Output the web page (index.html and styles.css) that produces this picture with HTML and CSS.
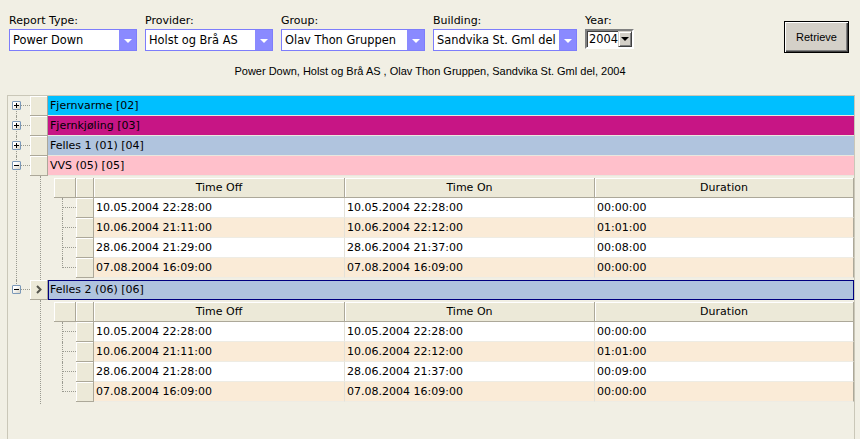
FILE: index.html
```html
<!DOCTYPE html>
<html lang="no">
<head>
    <meta charset="UTF-8">
    <title>Power Down</title>
    <link rel="stylesheet" href="styles.css">
</head>
<body>
<div class="toolbar">
    <div class="field">
        <label>Report Type:</label>
        <div class="combo w-small"><span>Power Down</span><i class="drop"></i></div>
    </div>
    <div class="field">
        <label>Provider:</label>
        <div class="combo w-small"><span>Holst og Brå AS</span><i class="drop"></i></div>
    </div>
    <div class="field">
        <label>Group:</label>
        <div class="combo w-wide"><span>Olav Thon Gruppen</span><i class="drop"></i></div>
    </div>
    <div class="field">
        <label>Building:</label>
        <div class="combo w-wide"><span>Sandvika St. Gml del</span><i class="drop"></i></div>
    </div>
    <div class="field">
        <label>Year:</label>
        <div class="year"><span>2004</span><i class="ybtn"></i></div>
    </div>
    <button type="button" class="retrieve">Retrieve</button>
</div>

<div class="summary">Power Down, Holst og Brå AS , Olav Thon Gruppen, Sandvika St. Gml del, 2004</div>

<div class="grid">

    <div class="node first">
        <div class="row">
            <div class="gutter"><span class="exp plus"></span></div>
            <div class="sel"></div>
            <div class="cell cyan">Fjernvarme [02]</div>
        </div>
    </div>

    <div class="node">
        <div class="row">
            <div class="gutter"><span class="exp plus"></span></div>
            <div class="sel"></div>
            <div class="cell magenta">Fjernkjøling [03]</div>
        </div>
    </div>

    <div class="node">
        <div class="row">
            <div class="gutter"><span class="exp plus"></span></div>
            <div class="sel"></div>
            <div class="cell steel">Felles 1 (01) [04]</div>
        </div>
    </div>

    <div class="node">
        <div class="row">
            <div class="gutter"><span class="exp minus"></span></div>
            <div class="sel"></div>
            <div class="cell pink">VVS (05) [05]</div>
        </div>
        <div class="children">
            <div class="sub">
                <div class="sub-head">
                    <div class="h-gap"></div>
                    <div class="h-sel"></div>
                    <div class="h col1">Time Off</div>
                    <div class="h col2">Time On</div>
                    <div class="h col3">Duration</div>
                </div>
                <div class="sub-row">
                    <div class="r-gap"></div><div class="sel"></div>
                    <div class="d col1">10.05.2004 22:28:00</div>
                    <div class="d col2">10.05.2004 22:28:00</div>
                    <div class="d col3">00:00:00</div>
                </div>
                <div class="sub-row alt">
                    <div class="r-gap"></div><div class="sel"></div>
                    <div class="d col1">10.06.2004 21:11:00</div>
                    <div class="d col2">10.06.2004 22:12:00</div>
                    <div class="d col3">01:01:00</div>
                </div>
                <div class="sub-row">
                    <div class="r-gap"></div><div class="sel"></div>
                    <div class="d col1">28.06.2004 21:29:00</div>
                    <div class="d col2">28.06.2004 21:37:00</div>
                    <div class="d col3">00:08:00</div>
                </div>
                <div class="sub-row alt">
                    <div class="r-gap"></div><div class="sel"></div>
                    <div class="d col1">07.08.2004 16:09:00</div>
                    <div class="d col2">07.08.2004 16:09:00</div>
                    <div class="d col3">00:00:00</div>
                </div>
            </div>
        </div>
    </div>

    <div class="node last">
        <div class="row">
            <div class="gutter"><span class="exp minus"></span></div>
            <div class="sel current">
                <svg width="6" height="9" viewBox="0 0 6 9"><polyline points="1,1 4.5,4.5 1,8" fill="none" stroke="#55554d" stroke-width="2"/></svg>
            </div>
            <div class="cell steel selected">Felles 2 (06) [06]</div>
        </div>
        <div class="children">
            <div class="sub">
                <div class="sub-head">
                    <div class="h-gap"></div>
                    <div class="h-sel"></div>
                    <div class="h col1">Time Off</div>
                    <div class="h col2">Time On</div>
                    <div class="h col3">Duration</div>
                </div>
                <div class="sub-row">
                    <div class="r-gap"></div><div class="sel"></div>
                    <div class="d col1">10.05.2004 22:28:00</div>
                    <div class="d col2">10.05.2004 22:28:00</div>
                    <div class="d col3">00:00:00</div>
                </div>
                <div class="sub-row alt">
                    <div class="r-gap"></div><div class="sel"></div>
                    <div class="d col1">10.06.2004 21:11:00</div>
                    <div class="d col2">10.06.2004 22:12:00</div>
                    <div class="d col3">01:01:00</div>
                </div>
                <div class="sub-row">
                    <div class="r-gap"></div><div class="sel"></div>
                    <div class="d col1">28.06.2004 21:28:00</div>
                    <div class="d col2">28.06.2004 21:37:00</div>
                    <div class="d col3">00:09:00</div>
                </div>
                <div class="sub-row alt">
                    <div class="r-gap"></div><div class="sel"></div>
                    <div class="d col1">07.08.2004 16:09:00</div>
                    <div class="d col2">07.08.2004 16:09:00</div>
                    <div class="d col3">00:00:00</div>
                </div>
            </div>
        </div>
    </div>

</div>
</body>
</html>
```

FILE: styles.css
```css
* {
    box-sizing: border-box;
}

html, body {
    width: 100%;
    height: 100%;
}

body {
    margin: 0;
    padding: 0;
    display: flex;
    flex-direction: column;
    background: #f1efe4;
    font-family: "DejaVu Sans", Verdana, sans-serif;
    font-size: 11px;
    color: #000;
    overflow: hidden;
}

/* top filter bar */
.toolbar {
    display: flex;
    align-items: flex-start;
    gap: 8px;
    padding: 12px 0 0 9px;
}

.field {
    display: flex;
    flex-direction: column;
}

.field label {
    height: 17px;
    line-height: 17px;
}

.combo {
    display: flex;
    height: 22px;
    border: 1px solid #7d7dfb;
    background: #fff;
}

.combo span {
    flex: 1;
    padding-left: 3px;
    line-height: 20px;
    font-size: 11.4px;
    white-space: nowrap;
    overflow: hidden;
}

.combo .drop {
    width: 17px;
    background: #8a8aff;
    display: flex;
    align-items: center;
    justify-content: center;
}

.combo .drop::after {
    content: "";
    border-left: 4px solid transparent;
    border-right: 4px solid transparent;
    border-top: 4px solid #fff;
    margin-top: 1px;
}

.w-small {
    width: 128px;
}

.w-wide {
    width: 144px;
}

.year {
    display: flex;
    width: 49px;
    height: 20px;
    background: #fff;
    border: 2px solid;
    border-color: #808080 #fff #fff #808080;
    box-shadow: 1px 1px 0 #404040 inset;
}

.year span {
    flex: 1;
    line-height: 16px;
    font-size: 11.4px;
    padding-left: 2px;
}

.year .ybtn {
    width: 16px;
    background: #d4d0c8;
    border: 1px solid;
    border-color: #d4d0c8 #404040 #404040 #d4d0c8;
    box-shadow: 1px 1px 0 #fff inset, -1px -1px 0 #808080 inset;
    display: flex;
    align-items: center;
    justify-content: center;
}

.year .ybtn::after {
    content: "";
    border-left: 4px solid transparent;
    border-right: 4px solid transparent;
    border-top: 4px solid #000;
}

.retrieve {
    margin: 9px 11px 0 auto;
    width: 65px;
    height: 32px;
    padding: 0;
    font-family: "Liberation Sans", Arial, sans-serif;
    font-size: 11px;
    color: #000;
    background: #d4d0c8;
    border: 1px solid #000;
    box-shadow: inset 1px 1px 0 #fff, inset -1px -1px 0 #404040, inset -2px -2px 0 #808080;
}

.summary {
    margin-top: 11px;
    height: 14px;
    line-height: 14px;
    text-align: center;
    font-family: "Liberation Sans", Arial, sans-serif;
    font-size: 11px;
}

/* hierarchical grid */
.grid {
    flex: 1;
    min-height: 0;
    overflow: hidden;
    margin: 17px 5px 0 7px;
    border: 1px solid #cac7b8;
    border-bottom: none;
}

.node {
    position: relative;
}

.node::before {
    content: "";
    position: absolute;
    left: 8px;
    top: 0;
    bottom: 0;
    border-left: 1px dotted #9a9a90;
}

.node.first::before {
    top: 9px;
}

.node.last::before {
    bottom: auto;
    height: 10px;
}

.row {
    display: flex;
    height: 20px;
}

.gutter {
    position: relative;
    width: 22px;
}

.gutter::after {
    content: "";
    position: absolute;
    left: 13px;
    right: 0;
    top: 9px;
    border-top: 1px dotted #9a9a90;
}

.exp {
    position: absolute;
    left: 4px;
    top: 5px;
    width: 9px;
    height: 9px;
    border: 1px solid #7b98b8;
    border-radius: 1px;
    background: linear-gradient(135deg, #fff 30%, #d6d2c4);
    z-index: 1;
}

.exp::before {
    content: "";
    position: absolute;
    left: 1px;
    top: 3px;
    width: 5px;
    height: 1px;
    background: #000;
}

.exp.plus::after {
    content: "";
    position: absolute;
    left: 3px;
    top: 1px;
    width: 1px;
    height: 5px;
    background: #000;
}

.sel {
    width: 18px;
    background: #ece9d8;
    border-right: 1px solid #aca899;
    border-bottom: 1px solid #aca899;
    box-shadow: inset 1px 1px 0 #fff;
}

.sel.current {
    display: flex;
    align-items: center;
    justify-content: center;
}

.cell {
    flex: 1;
    padding-left: 2px;
    line-height: 19px;
    border-bottom: 1px solid #e9e7de;
    white-space: nowrap;
}

.cell.selected {
    border: 1px solid #000080;
    padding-left: 1px;
    line-height: 18px;
}

.cyan { background: #00bfff; }
.magenta { background: #c71585; }
.steel { background: #b0c4de; }
.pink { background: #ffc0cb; }

.children {
    position: relative;
    padding: 2px 0;
}

.children::before {
    content: "";
    position: absolute;
    left: 32px;
    top: 0;
    bottom: 0;
    border-left: 1px dotted #9a9a90;
}

.sub {
    margin-left: 46px;
}

.sub-head {
    display: flex;
    height: 20px;
    background: #ece9d8;
}

.h-gap, .h-sel, .h {
    border-right: 1px solid #aca899;
    border-bottom: 1px solid #aca899;
    box-shadow: inset 1px 1px 0 #fff;
}

.h-gap {
    width: 22px;
}

.h-sel {
    width: 18px;
}

.h {
    text-align: center;
    line-height: 19px;
}

.col1 {
    width: 251px;
}

.col2 {
    width: 250px;
}

.col3 {
    flex: 1;
}

.sub-row {
    display: flex;
    height: 20px;
}

.r-gap {
    position: relative;
    width: 22px;
}

.r-gap::before {
    content: "";
    position: absolute;
    left: 8px;
    top: 0;
    bottom: 0;
    border-left: 1px dotted #9a9a90;
}

.sub-row:last-child .r-gap::before {
    bottom: auto;
    height: 10px;
}

.r-gap::after {
    content: "";
    position: absolute;
    left: 9px;
    right: 0;
    top: 9px;
    border-top: 1px dotted #9a9a90;
}

.d {
    background: #fff;
    padding-left: 2px;
    line-height: 19px;
    border-right: 1px solid #e3e1d8;
    border-bottom: 1px solid #eeece4;
    white-space: nowrap;
}

.sub-row.alt .d {
    background: #faebd7;
}

.d.col3 {
    border-right: 1px solid #aca899;
}
```
